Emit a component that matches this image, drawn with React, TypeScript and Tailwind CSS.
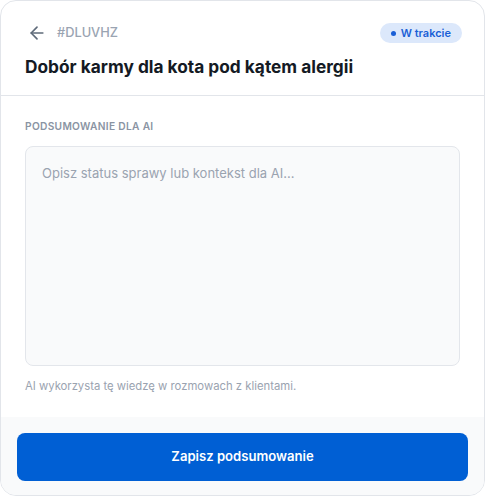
import { ArrowLeft } from 'lucide-react';

export default function App() {
  return (
    <div className="w-[486px] h-[497px] bg-white" style={{ fontFamily: 'Inter, "Noto Sans", sans-serif' }}>
      <div className="w-[485px] h-[496px] flex flex-col overflow-hidden rounded-2xl border border-[#e2e5ea] bg-white">
        {/* Header */}
        <div className="pl-6 pr-[22px] pt-[22px] pb-[14px] border-b border-[#e2e5ea]">
          <div className="flex items-center justify-between h-5">
            <div className="flex items-center gap-[10px] pl-[2px]">
              <ArrowLeft className="w-5 h-5 text-[#5f6b7a]" strokeWidth={2} />
              <span className="text-[12.8px] font-medium text-[#9aa4b2]">#DLUVHZ</span>
            </div>
            <span className="flex items-center gap-[5px] h-5 px-[11px] rounded-full bg-[#dce8fb] text-[11px] font-semibold text-[#1a5fd6]">
              <span className="w-[5px] h-[5px] rounded-full bg-[#1a5fd6]" />
              W trakcie
            </span>
          </div>
          <h1 className="mt-[10px] text-[17.3px] leading-7 font-bold text-[#141a24]">
            Dobór karmy dla kota pod kątem alergii
          </h1>
        </div>

        {/* Body */}
        <div className="flex-1 px-6 pt-6">
          <label className="block text-[10.2px] leading-[13px] font-semibold uppercase tracking-[0.03em] text-[#8a94a3]">
            Podsumowanie dla AI
          </label>
          <textarea
            placeholder="Opisz status sprawy lub kontekst dla AI..."
            className="mt-[13px] block w-full h-[220px] resize-none rounded-lg border border-[#e3e6eb] bg-[#f9fafb] px-4 py-4 text-[13px] leading-5 text-[#141a24] placeholder:text-[#9aa3b0] focus:outline-none"
          />
          <p className="mt-3 text-[11.3px] leading-4 text-[#9aa3b0]">AI wykorzysta tę wiedzę w rozmowach z klientami.</p>
        </div>

        {/* Footer */}
        <div className="bg-[#f9fafb] px-4 pt-4 pb-[14px]">
          <button className="w-full h-12 rounded-lg bg-[#005fd4] text-white text-[13.1px] font-semibold">
            Zapisz podsumowanie
          </button>
        </div>
      </div>
    </div>
  );
}
